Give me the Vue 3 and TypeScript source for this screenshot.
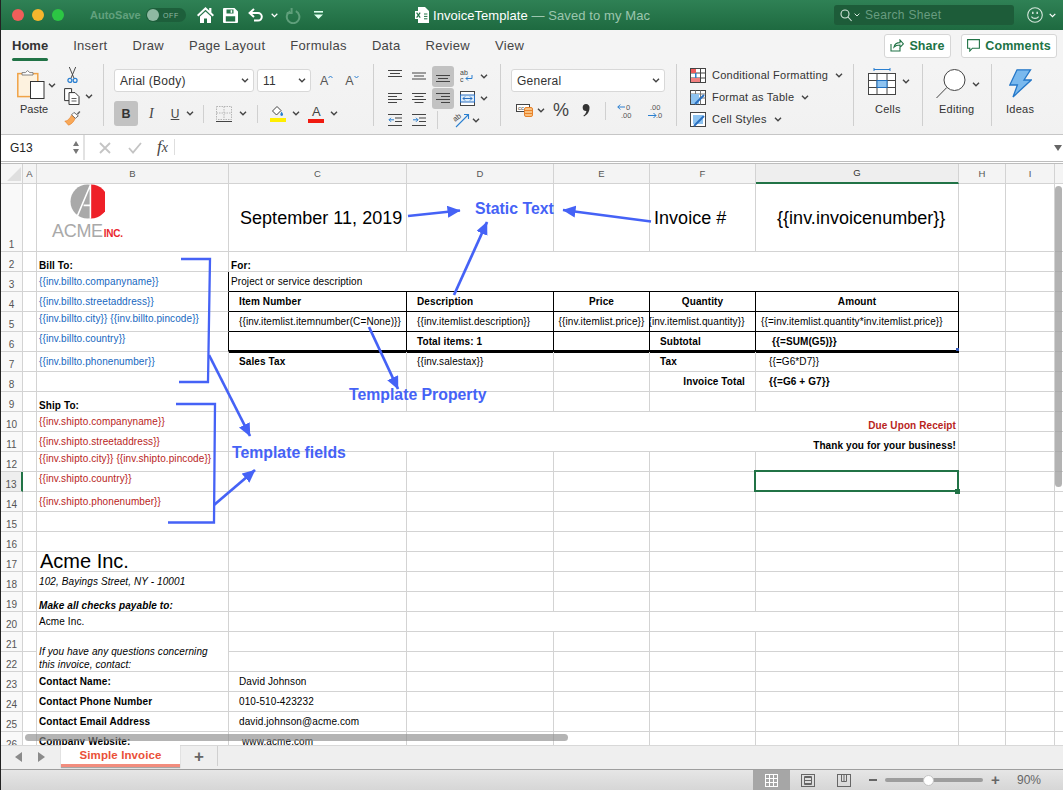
<script setup lang="ts">
type Spec = { t?: string; c?: string; span?: number; rows?: number; logo?: boolean }

const widths = [14, 192, 178, 147, 96, 106, 203, 47, 49, 9]
const colNames = ['A', 'B', 'C', 'D', 'E', 'F', 'G', 'H', 'I', '']
const gridColumns = '22px ' + widths.join('px ') + 'px'

const T = 'kr kb'
const spec: Record<number, Record<number, Spec>> = {
  1: {
    1: { logo: true },
    2: { t: 'September 11, 2019', c: 'big mc pl11' },
    5: { t: 'Invoice #', c: 'big mc pl4' },
    6: { t: '{{inv.invoicenumber}}', c: 'big mc pl21' },
  },
  2: { 1: { t: 'Bill To:', c: 'bold bot pl2' }, 2: { t: 'For:', c: 'bold bot pl2', span: 5 } },
  3: {
    1: { t: '{{inv.billto.companyname}}', c: 'blue mid pl2 kr' },
    2: { t: 'Project or service description', c: 'mid pl2 kb', span: 5 },
  },
  4: {
    1: { t: '{{inv.billto.streetaddress}}', c: 'blue mid pl2 kr' },
    2: { t: 'Item Number', c: 'bold mid pl10 ' + T },
    3: { t: 'Description', c: 'bold mid pl10 ' + T },
    4: { t: 'Price', c: 'bold mid ctr ' + T },
    5: { t: 'Quantity', c: 'bold mid ctr ' + T },
    6: { t: 'Amount', c: 'bold mid ctr ' + T },
  },
  5: {
    1: { t: '{{inv.billto.city}} {{inv.billto.pincode}}', c: 'blue top pl2 kr' },
    2: { t: '{{inv.itemlist.itemnumber(C=None)}}', c: 'mid pl10 ' + T },
    3: { t: '{{inv.itemlist.description}}', c: 'mid pl10 ' + T },
    4: { t: '{{inv.itemlist.price}}', c: 'mid ctr ' + T },
    5: { t: '{{inv.itemlist.quantity}}', c: 'mid clip ' + T },
    6: { t: '{{=inv.itemlist.quantity*inv.itemlist.price}}', c: 'mid pl5 ' + T },
  },
  6: {
    1: { t: '{{inv.billto.country}}', c: 'blue top pl2 kr' },
    2: { c: 'kr thick' },
    3: { t: 'Total items: 1', c: 'bold mid pl10 kr thick' },
    4: { c: 'kr thick' },
    5: { t: 'Subtotal', c: 'bold mid pl10 kr thick' },
    6: { t: '{{=SUM(G5)}}', c: 'bold mid pl16 kr thick handle' },
  },
  7: {
    1: { t: '{{inv.billto.phonenumber}}', c: 'blue mid pl2' },
    2: { t: 'Sales Tax', c: 'bold mid pl10' },
    3: { t: '{{inv.salestax}}', c: 'mid pl10' },
    5: { t: 'Tax', c: 'bold mid pl10' },
    6: { t: '{{=G6*D7}}', c: 'mid pl13' },
  },
  8: { 5: { t: 'Invoice Total', c: 'bold mid end pr10' }, 6: { t: '{{=G6 + G7}}', c: 'bold mid pl13' } },
  9: { 1: { t: 'Ship To:', c: 'bold bot pl2' } },
  10: {
    1: { t: '{{inv.shipto.companyname}}', c: 'red mid pl2' },
    2: { t: 'Due Upon Receipt', c: 'red bold bot end pr2', span: 5 },
  },
  11: {
    1: { t: '{{inv.shipto.streetaddress}}', c: 'red mid pl2' },
    2: { t: 'Thank you for your business!', c: 'bold bot end pr2', span: 5 },
  },
  12: { 1: { t: '{{inv.shipto.city}} {{inv.shipto.pincode}}', c: 'red top pl2' } },
  13: { 1: { t: '{{inv.shipto.country}}', c: 'red top pl2' }, 6: { c: 'sel' } },
  14: { 1: { t: '{{inv.shipto.phonenumber}}', c: 'red mid pl2' } },
  17: { 1: { t: 'Acme Inc.', c: 'acme pl3' } },
  18: { 1: { t: '102, Bayings Street, NY - 10001', c: 'ital mid pl2' } },
  19: { 1: { t: 'Make all checks payable to:', c: 'ital bold bot pl2' } },
  20: { 1: { t: 'Acme Inc.', c: 'mid pl2' }, 3: { span: 2 }, 5: { span: 2 } },
  21: { 1: { t: 'If you have any questions concerning this invoice, contact:', c: 'ital wrap pl2', rows: 2 } },
  23: { 1: { t: 'Contact Name:', c: 'bold mid pl2' }, 2: { t: 'David Johnson', c: 'mid pl10' } },
  24: { 1: { t: 'Contact Phone Number', c: 'bold mid pl2' }, 2: { t: '010-510-423232', c: 'mid pl10' } },
  25: { 1: { t: 'Contact Email Address', c: 'bold mid pl2' }, 2: { t: 'david.johnson@acme.com', c: 'mid pl10' } },
  26: { 1: { t: 'Company Website:', c: 'bold mid pl2' }, 2: { t: 'www.acme.com', c: 'mid pl13' } },
}

interface Cell { key: string; t?: string; cls: string; style?: Record<string, string>; logo?: boolean }
const cells: Cell[] = []
cells.push({ key: 'corner', cls: 'hd corner' })
colNames.forEach((n, i) => cells.push({ key: 'h' + i, t: n, cls: 'hd colh' + (n === 'G' ? ' active' : '') + (n === '' ? ' noline' : '') }))

for (let r = 1; r <= 26; r++) {
  cells.push({ key: 'r' + r, t: String(r), cls: 'hd rowh' + (r === 13 ? ' activer' : '') })
  const row = spec[r] || {}
  for (let c = 0; c < colNames.length; c++) {
    if (r === 22 && c === 1) continue
    const s = row[c] || {}
    const style: Record<string, string> = {}
    if (s.span) style.gridColumn = 'span ' + s.span
    if (s.rows) style.gridRow = 'span ' + s.rows
    cells.push({
      key: r + '-' + c,
      t: s.t,
      cls: 'cell ' + (s.c || '') + (c === 9 ? ' noline' : ''),
      style,
      logo: s.logo,
    })
    if (s.span) c += s.span - 1
  }
}
</script>

<template>
  <div class="win">
    <header class="titlebar">
      <div class="tb-left">
        <i class="light l-r"></i><i class="light l-y"></i><i class="light l-g"></i>
        <span class="autosave">AutoSave</span>
        <span class="toggle"><i class="knob"></i><b>OFF</b></span>
        <svg class="ic home" width="17" height="16" viewBox="0 0 17 16"><path fill="#fff" d="M8.5 0 0 8l1.4 1.4 7.1-6.6 7.1 6.6L17 8l-2.6-2.5V1h-2.2v2.4z"/><path fill="#fff" d="M8.5 4.6 3 9.6V16h4v-4.5h3V16h4V9.6z"/></svg>
        <svg class="ic save" width="15" height="15" viewBox="0 0 15 15"><path fill="#fff" fill-rule="evenodd" d="M1 0h10.5L15 3.4V14a1 1 0 0 1-1 1H1a1 1 0 0 1-1-1V1a1 1 0 0 1 1-1zm2.5 1.6v4h7v-4zm-.7 6.6v5.2h9.4V8.2z"/><rect x="7.6" y="2.2" width="1.6" height="2.6" fill="#fff"/></svg>
        <svg class="ic undo" width="16" height="14" viewBox="0 0 16 14" fill="none" stroke="#fff" stroke-width="2"><path d="M6 1 1.6 5 6 9"/><path d="M1.6 5H10a3.8 3.8 0 0 1 0 7.6H6"/></svg>
        <svg class="ic chevw" width="7" height="5" viewBox="0 0 7 5" fill="none" stroke="#fff" stroke-width="1.3"><path d="m.7.8 2.8 2.8L6.3.8"/></svg>
        <svg class="ic redo" width="16" height="17" viewBox="0 0 16 17" fill="none" stroke="#5f9f7b" stroke-width="2"><path d="M10.8 4.2a6.3 6.3 0 1 1-5.6.1"/><path d="M6.6 1v5H1.8"/></svg>
        <svg class="ic custom" width="9" height="8" viewBox="0 0 9 8"><rect width="9" height="1.6" fill="#dfe" /><path d="M0 3.4h9L4.5 8z" fill="#dfe"/></svg>
      </div>
      <svg class="docicon" width="14" height="16" viewBox="0 0 14 16"><path fill="#fff" d="M3 0h7l4 4v12H3z"/><rect x="0" y="4" width="8" height="8" fill="#fff"/><path d="m1.6 5.6 3.6 5M5.2 5.6l-3.6 5" stroke="#217346" stroke-width="1.2"/><path d="M9 7h3.4M9 9.4h3.4M9 11.8h3.4" stroke="#217346"/></svg>
      <span class="doc">InvoiceTemplate</span><span class="saved">&nbsp;— Saved to my Mac</span>
      <div class="search">
        <svg width="14" height="13" viewBox="0 0 14 13" fill="none" stroke="#d5e6dc" stroke-width="1.1"><circle cx="5" cy="5" r="4"/><path d="m8 8 3.6 4"/></svg>
        <svg class="s-chev" width="6" height="4" viewBox="0 0 6 4" fill="none" stroke="#d5e6dc"><path d="m.6.6 2.4 2.4L5.4.6"/></svg>
        <span>Search Sheet</span>
      </div>
      <svg class="smile" width="16" height="16" viewBox="0 0 16 16" fill="none" stroke="#d5e6dc" stroke-width="1.1"><circle cx="8" cy="8" r="7.3"/><path d="M4.4 9.6c1.6 2.4 5.6 2.4 7.2 0"/><path d="M5.8 4.8v2.2M10.2 4.8v2.2" stroke-width="1.5"/></svg>
      <svg class="sm-chev" width="7" height="5" viewBox="0 0 7 5" fill="none" stroke="#fff" stroke-width="1.2"><path d="m.7.8 2.8 2.8L6.3.8"/></svg>
    </header>

    <nav class="tabs">
      <span class="tab on">Home</span><span class="tab">Insert</span><span class="tab">Draw</span><span class="tab">Page Layout</span><span class="tab">Formulas</span><span class="tab">Data</span><span class="tab">Review</span><span class="tab">View</span>
      <button class="pill share">
        <svg width="14" height="13" viewBox="0 0 14 13" fill="none" stroke="#217346" stroke-width="1.1"><path d="M1 5v7h9V9"/><path d="M4 8c.6-3 3-4.4 6-4.4V1l3.4 3.8L10 8.4V6C7.6 6 5.4 6.6 4 8z"/></svg>
        Share
      </button>
      <button class="pill comments">
        <svg width="13" height="13" viewBox="0 0 13 13" fill="none" stroke="#217346" stroke-width="1.1"><path d="M.6.6h11.8v8.6H5.4L2.8 12V9.2H.6z"/></svg>
        Comments
      </button>
    </nav>

    <section class="ribbon">
      <div class="grp g-clip">
        <div class="paste">
          <div class="paste-top">
            <svg width="28" height="29" viewBox="0 0 28 29"><rect x=".8" y="3.6" width="20" height="23" fill="#fdf2df" stroke="#f0a347" stroke-width="1.5"/><path d="M5 5V2.6h3.4L10.6.6l2.2 2H16V5z" fill="#fff" stroke="#777" stroke-width=".9"/><rect x="13.5" y="11.5" width="13.5" height="17" fill="#fff" stroke="#333"/></svg>
            <svg class="chev" width="8" height="5" viewBox="0 0 8 5"><path d="m1 .8 3 3 3-3"/></svg>
          </div>
          <span class="lbl">Paste</span>
        </div>
        <div class="clip-small">
          <svg class="cut" width="11" height="17" viewBox="0 0 11 17" fill="none"><path d="M2.2 0 7 11.5M8.8 0 4 11.5" stroke="#444" stroke-width="1"/><circle cx="2.8" cy="13.8" r="2" stroke="#2a7fd0" stroke-width="1.3"/><circle cx="8.2" cy="13.8" r="2" stroke="#2a7fd0" stroke-width="1.3"/></svg>
          <div class="irow">
            <svg width="16" height="17" viewBox="0 0 16 17" fill="#fff" stroke="#333"><path d="M.6.6h7v12h-7z"/><path d="M5 4.6h6l4 4v8H5z"/><path d="M7.5 10.5h5M7.5 13h5" stroke-width=".8"/></svg>
            <svg class="chev mchev" width="8" height="5" viewBox="0 0 8 5"><path d="m1 .8 3 3 3-3"/></svg>
          </div>
          <svg class="brush" width="17" height="16" viewBox="0 0 17 16"><path d="M10 2.5 14.5 6l-3 2.6L7.6 5z" fill="#fff" stroke="#666"/><path d="m13 3.6 2.6-2.6 1 1-2.4 2.8z" fill="#666"/><path d="M7.4 5.4 11 9c-1 3-3.5 5.6-6.6 6.6L.6 11.4c1.4 0 2.6-.4 3.6-1.6C5.6 9 6.6 7 7.4 5.4z" fill="#f8a858" stroke="#e8822a" stroke-width=".7"/></svg>
        </div>
      </div>

      <div class="grp g-font">
        <div class="r1">
          <div class="sel-box font-box">Arial (Body)<svg class="chev" width="8" height="5" viewBox="0 0 8 5"><path d="m1 .8 3 3 3-3"/></svg></div>
          <div class="sel-box size-box">11<svg class="chev" width="8" height="5" viewBox="0 0 8 5"><path d="m1 .8 3 3 3-3"/></svg></div>
          <span class="aa a1">A<svg width="5" height="4" viewBox="0 0 5 4" fill="none" stroke="#2a7fd0"><path d="m.5 3 2-2 2 2"/></svg></span>
          <span class="aa a2">A<svg width="5" height="4" viewBox="0 0 5 4" fill="none" stroke="#2a7fd0"><path d="m.5 1 2 2 2-2"/></svg></span>
        </div>
        <div class="r2">
          <span class="fbtn bsel">B</span>
          <span class="fbtn it">I</span>
          <span class="fbtn un">U</span>
          <svg class="chev c-u" width="8" height="5" viewBox="0 0 8 5"><path d="m1 .8 3 3 3-3"/></svg>
          <i class="vsep s1"></i>
          <svg class="bd" width="16" height="16" viewBox="0 0 16 16" fill="none" stroke="#b5b5b5" stroke-dasharray="1.5 1"><rect x=".5" y=".5" width="15" height="13"/><path d="M8 .5v13M.5 7h15"/><path d="M0 15.5h16" stroke="#444" stroke-dasharray="none"/></svg>
          <svg class="chev c-b" width="8" height="5" viewBox="0 0 8 5"><path d="m1 .8 3 3 3-3"/></svg>
          <i class="vsep s2"></i>
          <svg class="fill" width="16" height="17" viewBox="0 0 16 17"><path d="M7 1.5 2.5 6l4 4 4.5-4.500z" fill="#fff" stroke="#444"/><path d="M11.500 6.500c1 1.400 1.600 2.200 1.600 3a1.400 1.400 0 0 1-2.800 0c0-.8.600-1.600 1.200-3z" fill="#2a7fd0"/><rect y="13" width="16" height="4" fill="#ffee00"/></svg>
          <svg class="chev c-f" width="8" height="5" viewBox="0 0 8 5"><path d="m1 .8 3 3 3-3"/></svg>
          <span class="fcol">A</span>
          <svg class="chev c-c" width="8" height="5" viewBox="0 0 8 5"><path d="m1 .8 3 3 3-3"/></svg>
        </div>
      </div>

      <div class="grp g-align">
        <div class="al-grid">
          <span class="al"><svg width="14" height="12" viewBox="0 0 14 12"><path d="M0 .5h14M2 3.500h10M0 6.500h14"/></svg></span>
          <span class="al"><svg width="14" height="12" viewBox="0 0 14 12"><path d="M0 3h14M2 6h10M0 9h14"/></svg></span>
          <span class="al hl"><svg width="14" height="12" viewBox="0 0 14 12"><path d="M0 5.500h14M2 8.500h10M0 11.500h14"/></svg></span>
          <span class="al"><svg width="14" height="14" viewBox="0 0 14 14" fill="none"><text x="0" y="6" font-size="7" fill="#444" stroke="none" font-family="Liberation Sans">ab</text><text x="0" y="13" font-size="7" fill="#444" stroke="none" font-family="Liberation Sans">c</text><path d="M12 6v3.500H6m2-2-2 2 2 2" stroke="#2a7fd0"/></svg></span>
          <svg class="chev" width="8" height="5" viewBox="0 0 8 5"><path d="m1 .8 3 3 3-3"/></svg>

          <span class="al"><svg width="14" height="12" viewBox="0 0 14 12"><path d="M0 1.500h14M0 4.500h9M0 7.500h14M0 10.500h9"/></svg></span>
          <span class="al"><svg width="14" height="12" viewBox="0 0 14 12"><path d="M0 1.500h14M2.500 4.500h9M0 7.500h14M2.500 10.500h9"/></svg></span>
          <span class="al hl"><svg width="14" height="12" viewBox="0 0 14 12"><path d="M0 1.500h14M5 4.500h9M0 7.500h14M5 10.500h9"/></svg></span>
          <span class="al"><svg width="15" height="15" viewBox="0 0 15 15" fill="none"><rect x=".5" y=".5" width="14" height="14" stroke="#444" fill="#fff"/><rect x=".5" y="4" width="14" height="7" stroke="#2a6fc0" fill="#dcecfa"/><path d="M3 7.500h9M5 5.500l-2 2 2 2M10 5.500l2 2-2 2" stroke="#2a6fc0"/></svg></span>
          <svg class="chev" width="8" height="5" viewBox="0 0 8 5"><path d="m1 .8 3 3 3-3"/></svg>

          <span class="al"><svg width="14" height="12" viewBox="0 0 14 12"><path d="M0 .5h14M7 4h7M7 7.500h7M0 11.500h14"/><path d="M6 5.800H1m2-2-2 2 2 2" stroke="#2a7fd0" fill="none"/></svg></span>
          <span class="al"><svg width="14" height="12" viewBox="0 0 14 12"><path d="M0 .5h14M7 4h7M7 7.500h7M0 11.500h14"/><path d="M1 5.800h5m-2-2 2 2-2 2" stroke="#2a7fd0" fill="none"/></svg></span>
          <i class="vsep s3"></i>
          <span class="al orient"><svg width="17" height="16" viewBox="0 0 17 16" fill="none"><text x="0" y="8" font-size="7.500" fill="#444" stroke="none" font-family="Liberation Sans" transform="rotate(-40 4 6)">ab</text><path d="M3 15 15.500 2.500m-4.500 0h4.500V7" stroke="#2a7fd0" stroke-width="1.100"/></svg></span>
          <svg class="chev c3" width="8" height="5" viewBox="0 0 8 5"><path d="m1 .8 3 3 3-3"/></svg>
        </div>
      </div>

      <div class="grp g-num">
        <div class="sel-box num-box">General<svg class="chev" width="8" height="5" viewBox="0 0 8 5"><path d="m1 .8 3 3 3-3"/></svg></div>
        <div class="r2 n2">
          <svg class="acct" width="18" height="13" viewBox="0 0 18 13" fill="none"><rect x=".5" y=".5" width="13" height="7" stroke="#444" fill="#fff"/><text x="2" y="6.300" font-size="6" fill="#444" font-family="Liberation Sans">cc</text><rect x="8.500" y="3.500" width="8" height="9" rx="1.500" fill="#f8c07e" stroke="#e8822a"/><path d="M8.500 6.500h8M8.500 9.500h8" stroke="#e8822a"/></svg>
          <svg class="chev c-acct" width="8" height="5" viewBox="0 0 8 5"><path d="m1 .8 3 3 3-3"/></svg>
          <span class="pct">%</span>
          <svg class="comma" width="8" height="13" viewBox="0 0 8 13"><path fill="#333" d="M4 0a3.500 3.500 0 0 1 3.500 4c0 4-2.500 7-5.500 8.500l-.6-.9c1.800-1.200 2.800-2.800 3-4.600A3.500 3.500 0 1 1 4 0z"/></svg>
          <i class="vsep s4"></i>
          <svg class="dec" width="17" height="16" viewBox="0 0 17 16" fill="none"><text x="9" y="6.500" font-size="7.500" fill="#555" font-family="Liberation Sans">0</text><text x="4" y="15" font-size="7.500" fill="#555" font-family="Liberation Sans">.00</text><path d="M8 4H.8m2.500-2.500L.8 4l2.500 2.500" stroke="#2a7fd0"/></svg>
          <svg class="dec2" width="16" height="16" viewBox="0 0 16 16" fill="none"><text x="3" y="6.500" font-size="7.500" fill="#555" font-family="Liberation Sans">.00</text><text x="9" y="15" font-size="7.500" fill="#555" font-family="Liberation Sans">.0</text><path d="M1 12.500h8m-2.500-2.500 2.500 2.500L6.500 15" stroke="#2a7fd0"/></svg>
        </div>
      </div>

      <div class="grp g-styles">
        <div class="st">
          <svg width="16" height="15" viewBox="0 0 16 15" fill="none" stroke="#444"><rect x=".5" y=".5" width="15" height="14" fill="#fff"/><path d="M5.500.5v14M10.500.5v14M.5 5h15M.5 10h15"/><rect x="1" y="1" width="5" height="4" fill="#ee5a5a" stroke="none"/><rect x="1" y="10" width="9" height="4" fill="#f28080" stroke="none"/><rect x="5" y="5" width="1.500" height="5" fill="#2a7fd0" stroke="none"/></svg>
          <span>Conditional Formatting</span>
          <svg class="chev" width="8" height="5" viewBox="0 0 8 5"><path d="m1 .8 3 3 3-3"/></svg>
        </div>
        <div class="st">
          <svg width="16" height="15" viewBox="0 0 16 15" fill="none" stroke="#444"><rect x=".5" y=".5" width="15" height="14" fill="#fff"/><path d="M.5 4h15M.5 8h15M5.500.5v14M10.500.5v14" stroke="#777"/><rect x="1" y="4" width="8" height="10" fill="#8ec3f0" stroke="none"/><path d="m5 14 9-9" stroke="#2a6fc0" stroke-width="2"/></svg>
          <span>Format as Table</span>
          <svg class="chev" width="8" height="5" viewBox="0 0 8 5"><path d="m1 .8 3 3 3-3"/></svg>
        </div>
        <div class="st">
          <svg width="16" height="15" viewBox="0 0 16 15" fill="none" stroke="#444"><rect x=".5" y=".5" width="15" height="14" fill="#fff"/><rect x="3" y="3" width="10" height="9" fill="#8ec3f0" stroke="none"/><path d="m4 14 10-10" stroke="#2a6fc0" stroke-width="2"/></svg>
          <span>Cell Styles</span>
          <svg class="chev" width="8" height="5" viewBox="0 0 8 5"><path d="m1 .8 3 3 3-3"/></svg>
        </div>
      </div>

      <div class="grp g-big g-cells">
        <div class="big-top">
          <svg width="28" height="27" viewBox="0 0 28 27" fill="none" stroke="#444"><path d="M6 1.500h16M6 0v3M22 0v3" stroke="#2a7fd0"/><rect x=".5" y="5.500" width="27" height="21" fill="#fff"/><path d="M9 5.500v21M19 5.500v21M.5 12.500h27M.5 19.500h27"/><rect x="9" y="12.500" width="10" height="7" fill="#8ec3f0" stroke="#1f70c0"/></svg>
          <svg class="chev" width="8" height="5" viewBox="0 0 8 5"><path d="m1 .8 3 3 3-3"/></svg>
        </div>
        <span class="lbl">Cells</span>
      </div>
      <div class="grp g-big g-edit">
        <div class="big-top">
          <svg width="30" height="30" viewBox="0 0 30 30" fill="none" stroke="#444"><circle cx="18.500" cy="11" r="10.500" fill="#fff"/><path d="M10.800 18.500.5 29"/></svg>
          <svg class="chev" width="8" height="5" viewBox="0 0 8 5"><path d="m1 .8 3 3 3-3"/></svg>
        </div>
        <span class="lbl">Editing</span>
      </div>
      <div class="grp g-big g-ideas">
        <svg width="23" height="29" viewBox="0 0 23 29"><path d="M8 .8h13.500L15 11h7.200L4 28l4.400-12H.8z" fill="#7ab9ee" stroke="#2477c8" stroke-width="1.300"/></svg>
        <span class="lbl">Ideas</span>
      </div>
    </section>

    <div class="formula">
      <div class="namebox">
        <span>G13</span>
        <div class="step"><i class="up"></i><i class="dn"></i></div>
      </div>
      <svg class="fx-x" width="12" height="12" viewBox="0 0 12 12" fill="none" stroke="#c4c4c4" stroke-width="1.800"><path d="m1 1 10 10M11 1 1 11"/></svg>
      <svg class="fx-c" width="14" height="12" viewBox="0 0 14 12" fill="none" stroke="#c4c4c4" stroke-width="1.800"><path d="m1 6 4 4.500L13 1"/></svg>
      <span class="fx"><i>f</i><i>x</i></span>
      <i class="fx-sep"></i>
      <i class="fx-drop"></i>
    </div>

    <main class="sheet">
      <div class="grid" :style="{ gridTemplateColumns: gridColumns }">
        <div v-for="c in cells" :key="c.key" :class="c.cls" :style="c.style">
          <div v-if="c.logo" class="logo">
            <svg width="35" height="35" viewBox="0 0 36 36"><circle cx="18" cy="18" r="17.500" fill="#a9a9a9"/><path d="M21.500.4A17.500 17.500 0 0 1 21.500 35.600z" fill="#ee2028"/><path d="M7.500 33 21 1M21 .5V35.500M14 22h7" stroke="#fff" stroke-width="1.600" fill="none"/></svg>
            <div class="acme-word"><span class="a-g">ACME</span><span class="a-r">INC.</span></div>
          </div>
          <template v-else>{{ c.t }}</template>
        </div>
      </div>

      <svg class="marks" width="1062" height="581" viewBox="1 164 1062 581" fill="none">
        <defs>
          <marker id="ah" markerUnits="userSpaceOnUse" markerWidth="15" markerHeight="13" refX="12.500" refY="6" orient="auto"><path d="M0 0 13 6 0 12z" fill="#4562f6"/></marker>
        </defs>
        <g stroke="#4562f6" stroke-width="2.300">
          <path d="M181 259h29l-2 123h-29"/>
          <path d="M176 404h39l-1 118.500h-46"/>
        </g>
        <g stroke="#4562f6" stroke-width="2.700">
          <path d="M209 355 250 436" marker-end="url(#ah)"/>
          <path d="M214 505 255 470" marker-end="url(#ah)"/>
          <path d="M454 295 487 222" marker-end="url(#ah)"/>
          <path d="M408 216 460 210.500" marker-end="url(#ah)"/>
          <path d="M651 221.500 563 210" marker-end="url(#ah)"/>
          <path d="M369 327 398 389" marker-end="url(#ah)"/>
        </g>
      </svg>
      <span class="note n-static">Static Text</span>
      <span class="note n-prop">Template Property</span>
      <span class="note n-fields">Template fields</span>

      <i class="hscroll"></i>
      <i class="vscroll"></i>
    </main>

    <div class="sheetbar">
      <i class="tri tl"></i><i class="tri tr"></i>
      <span class="sheettab">Simple Invoice</span>
      <span class="plus">+</span>
      <i class="bar-sep"></i>
    </div>

    <footer class="status">
      <span class="view active-view"><svg width="13" height="13" viewBox="0 0 13 13" fill="none" stroke="#fff"><rect x=".5" y=".5" width="12" height="12"/><path d="M4.500.5v12M8.500.5v12M.5 4.500h12M.5 8.500h12"/></svg></span>
      <span class="view"><svg width="14" height="13" viewBox="0 0 14 13" fill="none" stroke="#666"><rect x=".5" y=".5" width="13" height="12"/><path d="M4 3.500h6M4 6.500h6M4 9.500h6M3.500 2.500h7v8h-7z"/></svg></span>
      <span class="view"><svg width="14" height="13" viewBox="0 0 14 13" fill="none" stroke="#666"><rect x=".5" y=".5" width="13" height="12"/><path d="M4.500.5v7h5v-7M7 .5v7"/></svg></span>
      <i class="zminus"></i>
      <div class="slider"><i class="thumb"></i></div>
      <span class="zplus">+</span>
      <span class="zoom">90%</span>
    </footer>
  </div>
</template>

<style>
html, body { margin: 0; padding: 0; background: #fff; }
</style>

<style scoped>
.win {
  width: 1063px; height: 790px; box-sizing: border-box; border-left: 1px solid #222;
  display: flex; flex-direction: column; overflow: hidden; background: #fff;
  font-family: "Liberation Sans", Arial, sans-serif; color: #000;
}

/* title bar */
.titlebar { height: 30px; flex: none; display: flex; align-items: center; background: linear-gradient(#2f8155, #1e6a40); color: #fff; }
.tb-left { width: 414px; display: flex; align-items: center; padding-left: 11px; box-sizing: border-box; flex: none; height: 30px; }
.light { width: 12px; height: 12px; border-radius: 50%; margin-right: 8px; flex: none; }
.l-r { background: #ef5e5a; }
.l-y { background: #f7b62d; }
.l-g { background: #2cc644; }
.autosave { margin-left: 18px; font-size: 11px; font-weight: 700; color: #62a17e; width: 56px; flex: none; }
.toggle { width: 40px; height: 14px; border-radius: 7px; background: #1d5f3b; display: flex; align-items: center; flex: none; box-sizing: border-box; padding-left: 1px; }
.knob { width: 12px; height: 12px; border-radius: 50%; background: #8fb9a2; flex: none; }
.toggle b { font-size: 7px; color: #8fb9a2; margin-left: 4px; font-weight: 400; letter-spacing: .6px; }
.ic { flex: none; }
.home { margin-left: 11px; }
.save { margin-left: 9px; }
.undo { margin-left: 10px; }
.chevw { margin-left: 7px; }
.redo { margin-left: 7px; }
.custom { margin-left: 13px; }
.docicon { flex: none; }
.doc { margin-left: 4px; font-size: 13px; color: #fff; letter-spacing: .05px; }
.saved { font-size: 13px; color: #9cc6ae; white-space: nowrap; letter-spacing: .1px; }
.search { margin-left: auto; width: 180px; height: 20px; background: #1d5c39; border-radius: 3px; display: flex; align-items: center; padding-left: 6px; box-sizing: border-box; color: #689c80; font-size: 12px; letter-spacing: .3px; }
.s-chev { margin: 0 5px 0 0; }
.smile { margin-left: 13px; flex: none; }
.sm-chev { margin: 0 7px 0 6px; flex: none; }

/* tabs */
.tabs { height: 34px; flex: none; display: flex; align-items: center; background: #f4f4f4; padding: 0 6px 3px 11px; box-sizing: border-box; gap: 25px; font-size: 13px; color: #454545; letter-spacing: .3px; }
.tab { position: relative; line-height: 20px; white-space: nowrap; }
.tab.on { font-weight: 700; color: #333; letter-spacing: 0; }
.tab.on::after { content: ""; position: absolute; left: 0; right: 0; bottom: -5px; height: 3px; background: #217346; border-radius: 2px; }
.pill { height: 24px; background: #fff; border: 1px solid #d6d6d6; border-radius: 3px; color: #217346; font: 700 12.500px "Liberation Sans", Arial, sans-serif; display: flex; align-items: center; justify-content: center; gap: 5px; padding: 0; letter-spacing: .1px; }
.share { width: 67px; margin-left: auto; }
.comments { width: 96px; margin-left: -15px; }

/* ribbon */
.ribbon { height: 71px; flex: none; display: flex; background: linear-gradient(#f4f4f4, #f1f1f1); border-bottom: 1px solid #c6c6c6; box-sizing: border-box; font-size: 11px; color: #333; }
.grp { height: 62px; margin-top: 0; box-sizing: border-box; border-right: 1px solid #cfcfcf; flex: none; }
.chev { fill: none; stroke: #444; stroke-width: 1.400; flex: none; }
.lbl { font-size: 11px; letter-spacing: .25px; color: #333; white-space: nowrap; line-height: 13px; }

.g-clip { width: 103px; display: flex; padding-left: 16px; }
.paste { width: 46px; display: flex; flex-direction: column; align-items: flex-start; padding-top: 6px; }
.paste-top { display: flex; align-items: flex-start; }
.paste-top .chev { margin: 13px 0 0 3px; }
.paste .lbl { margin: 4px 0 0 3px; letter-spacing: 0; }
.clip-small { display: flex; flex-direction: column; align-items: flex-start; padding-top: 3px; margin-left: 1px; }
.cut { margin-left: 3px; }
.irow { display: flex; align-items: center; margin-top: 5px; }
.mchev { margin-left: 5px; }
.brush { margin-top: 5px; }

.g-font { width: 270px; padding: 5px 0 0 10px; }
.r1, .r2 { display: flex; align-items: center; }
.sel-box { height: 23px; background: #fff; border: 1px solid #d8d8d8; border-radius: 3px; box-sizing: border-box; display: flex; align-items: center; justify-content: space-between; padding: 0 4px 0 5px; font-size: 12px; color: #333; letter-spacing: .25px; }
.font-box { width: 140px; }
.size-box { width: 54px; margin-left: 3px; }
.aa { font-size: 12.500px; color: #555; display: flex; align-items: flex-start; }
.aa svg { margin-top: 1px; }
.a1 { margin-left: 9px; }
.a2 { margin-left: 12px; }
.r2 { margin-top: 9px; height: 25px; }
.fbtn { font-size: 12.500px; color: #444; }
.bsel { width: 24px; height: 25px; background: #c2c2c2; border-radius: 3px; font-weight: 700; display: flex; align-items: center; justify-content: center; color: #333; }
.it { font-family: "Liberation Serif", serif; font-style: italic; margin-left: 11px; font-size: 14px; }
.un { text-decoration: underline; margin-left: 17px; font-size: 12px; }
.c-u { margin-left: 7px; }
.vsep { display: block; width: 1px; background: #d0d0d0; flex: none; }
.s1 { height: 18px; margin-left: 9px; }
.bd { margin-left: 12px; flex: none; }
.c-b { margin-left: 7px; }
.s2 { height: 18px; margin-left: 10px; }
.fill { margin-left: 12px; flex: none; }
.c-f { margin-left: 6px; }
.fcol { margin-left: 8px; width: 16px; text-align: center; font-size: 13px; line-height: 14px; color: #444; border-bottom: 4px solid #f01a10; }
.c-c { margin-left: 6px; }

.g-align { width: 127px; padding: 0 0 0 10px; }
.al-grid { display: grid; grid-template-columns: 24px 24px 24px 24px 14px; grid-auto-rows: 22px; align-items: center; padding-top: 1px; }
.al { height: 21px; width: 22px; display: flex; align-items: center; justify-content: center; border-radius: 3px; }
.al svg { stroke: #444; flex: none; }
.al.hl { background: #c2c2c2; }
.s3 { height: 18px; justify-self: start; margin-left: 5px; grid-column: 3; }
.orient { margin-left: -6px; grid-column: 4; }
.c3 { margin-left: -8px; }

.g-num { width: 176px; padding: 5px 0 0 10px; }
.num-box { width: 154px; }
.n2 { margin-top: 6px; }
.acct { margin-left: 5px; flex: none; }
.c-acct { margin-left: 3px; }
.pct { font-size: 18px; color: #444; margin-left: 8px; width: 20px; }
.comma { margin-left: 9px; flex: none; }
.s4 { height: 18px; margin-left: 15px; }
.dec { margin-left: 11px; flex: none; }
.dec2 { margin-left: 13px; flex: none; }

.g-styles { width: 177px; padding: 0 0 0 13px; display: flex; flex-direction: column; }
.st { height: 22px; flex: none; display: flex; align-items: center; font-size: 11px; letter-spacing: .25px; color: #333; }
.st span { margin: 0 7px 0 6px; }

.g-big { display: flex; flex-direction: column; align-items: center; }
.big-top { display: flex; align-items: center; }
.big-top .chev { margin-left: 6px; }
.g-big .lbl { margin-top: auto; margin-bottom: 10px; }
.g-cells { width: 69px; padding: 4px 0 0 0; align-items: flex-start; padding-left: 14px; }
.g-cells .lbl { margin-left: 7px; }
.g-edit { width: 69px; padding: 5px 0 0 13px; align-items: flex-start; }
.g-edit .lbl { margin-left: 3px; }
.g-ideas { width: 69px; border-right: 0; padding: 5px 0 0 17px; align-items: flex-start; }
.g-ideas .lbl { margin-left: -3px; }

/* formula bar */
.formula { height: 29px; flex: none; display: flex; align-items: flex-start; background: #fff; border-bottom: 3px double #bdbdbd; box-sizing: border-box; }
.namebox { width: 84px; height: 25px; flex: none; box-sizing: border-box; border-right: 2px solid #e2e2e2; display: flex; align-items: center; justify-content: space-between; padding: 0 4px 0 9px; font-size: 12px; color: #222; }
.step { display: flex; flex-direction: column; gap: 3px; }
.step i { display: block; width: 0; height: 0; border-left: 3.500px solid transparent; border-right: 3.500px solid transparent; }
.step .up { border-bottom: 5px solid #777; }
.step .dn { border-top: 5px solid #777; }
.fx-x { margin: 7px 0 0 14px; flex: none; }
.fx-c { margin: 7px 0 0 17px; flex: none; }
.fx { font: italic 17px "Liberation Serif", serif; margin: 2px 0 0 15px; color: #444; width: 16px; }
.fx i:last-child { font-size: 14px; }
.fx-sep { width: 1px; height: 16px; background: #dedede; margin: 4px 0 0 1px; flex: none; }
.fx-drop { margin: 10px 1px 0 auto; width: 0; height: 0; border-left: 4px solid transparent; border-right: 4px solid transparent; border-top: 6px solid #666; }

/* sheet */
.sheet { height: 581px; flex: none; position: relative; overflow: hidden; background: #fff; }
.grid { display: grid; grid-template-rows: 20px 68px; grid-auto-rows: 20px; font-size: 10px; line-height: 12px; }
.hd, .cell { box-sizing: border-box; border-right: 1px solid #d3d3d3; border-bottom: 1px solid #d3d3d3; white-space: nowrap; min-width: 0; }
.cell { display: flex; overflow: visible; letter-spacing: .1px; }
.noline { border-right: 0; }
.hd { background: #f6f6f6; color: #555; font-size: 9.500px; display: flex; }
.corner { position: relative; }
.corner::after { content: ""; position: absolute; right: 1px; bottom: 2px; border-style: solid; border-width: 0 0 14px 14px; border-color: transparent transparent #dfdfdf transparent; }
.colh { align-items: center; justify-content: center; background: #f4f4f4; }
.colh.active { background: #eeeeee; color: #333; border-bottom: 2px solid #217346; }
.rowh { align-items: flex-end; justify-content: center; padding-bottom: 0; font-size: 10px; line-height: 12px; background: #f9f9f9; }
.rowh.activer { background: #eeeeee; border-right: 2px solid #217346; }

.top { padding-top: 1px; }
.mid { padding-top: 4px; }
.bot { padding-top: 8px; }
.mc { align-items: center; }
.pl2 { padding-left: 2px; }
.pl3 { padding-left: 3px; }
.pl4 { padding-left: 4px; }
.pl5 { padding-left: 5px; }
.pl10 { padding-left: 10px; }
.pl11 { padding-left: 11px; }
.pl13 { padding-left: 13px; }
.pl16 { padding-left: 16px; }
.pl21 { padding-left: 21px; }
.pr2 { padding-right: 2px; }
.pr10 { padding-right: 10px; }
.ctr { justify-content: center; }
.end { justify-content: flex-end; }
.clip { overflow: hidden; text-indent: -5px; }
.bold { font-weight: 700; }
.ital { font-style: italic; }
.blue { color: #1667c0; }
.red { color: #b8241c; }
.big { font-size: 18px; letter-spacing: .03px; line-height: 22px; }
.acme { font-size: 20px; line-height: 18px; letter-spacing: 0; }
.wrap { white-space: normal; align-items: flex-end; padding-bottom: 0; line-height: 12.500px; padding-right: 8px; }
.kr { border-right-color: #000; }
.kb { border-bottom-color: #000; }
.thick { border-bottom: 2px solid #000; box-shadow: 0 1px 0 #000; }
.handle { position: relative; }
.handle::after { content: ""; position: absolute; right: -1px; bottom: -1px; width: 3px; height: 3px; background: #3458b8; }
.sel { position: relative; }
.sel::before { content: ""; position: absolute; left: -2px; top: -2px; right: -1px; bottom: -1px; border: 2px solid #217346; }
.sel::after { content: ""; position: absolute; right: -2px; bottom: -3px; width: 5px; height: 5px; background: #217346; }

.logo { width: 100%; display: flex; flex-direction: column; align-items: flex-start; }
.logo svg { margin: 0 0 0 33px; display: block; }
.acme-word { display: flex; align-items: baseline; margin: 2px 0 0 15px; line-height: 20px; letter-spacing: -.3px; }
.a-g { font-size: 18px; color: #a9a9a9; }
.a-r { font-size: 10px; font-weight: 700; color: #e9272e; margin-left: 1px; }

.marks { position: absolute; left: 0; top: 0; pointer-events: none; }
.note { position: absolute; font-size: 15.800px; font-weight: 700; color: #4562f6; line-height: 18px; white-space: nowrap; }
.n-static { left: 474px; top: 36px; }
.n-prop { left: 348px; top: 222px; }
.n-fields { left: 231px; top: 280px; }
.hscroll { position: absolute; left: 24px; top: 570px; width: 543px; height: 7px; background: rgba(140, 140, 140, .65); border-radius: 4px; }
.vscroll { position: absolute; left: 1054px; top: 22px; width: 7px; height: 301px; background: rgba(160, 160, 160, .8); border-radius: 4px; }

/* sheet tabs */
.sheetbar { height: 25px; flex: none; background: #efefef; border-top: 1px solid #d8d8d8; border-bottom: 1px solid #9e9e9e; box-sizing: border-box; display: flex; align-items: flex-start; }
.tri { width: 0; height: 0; border-top: 5.500px solid transparent; border-bottom: 5.500px solid transparent; margin-top: 6px; }
.tl { border-right: 7px solid #8a8a8a; margin-left: 14px; }
.tr { border-left: 7px solid #8a8a8a; margin-left: 16px; }
.sheettab { width: 119px; height: 22px; margin: -1px 0 0 16px; box-sizing: border-box; background: #fff; color: #ea5038; font-size: 11.500px; font-weight: 700; display: flex; align-items: center; justify-content: center; border-bottom: 3px solid #f28d7e; box-shadow: 0 1px 1px rgba(0,0,0,.3); letter-spacing: .1px; }
.plus { margin-left: 14px; width: 10px; font-size: 17px; font-weight: 700; color: #666; line-height: 21px; }
.bar-sep { width: 1px; height: 20px; background: #d0d0d0; margin-left: 13px; }

/* status */
.status { height: 20px; flex: none; background: linear-gradient(#e6e6e6, #d6d6d6); display: flex; align-items: center; font-size: 12px; color: #666; padding-left: 752px; box-sizing: border-box; }
.view { width: 36px; height: 20px; display: flex; align-items: center; justify-content: center; flex: none; }
.active-view { background: #a6a6a6; width: 37px; }
.zminus { width: 8px; height: 2px; background: #666; margin-left: 7px; flex: none; }
.slider { width: 98px; height: 4px; border-radius: 2px; background: #9d9d9d; margin-left: 8px; display: flex; align-items: center; justify-content: flex-start; flex: none; }
.thumb { width: 11px; height: 11px; border-radius: 50%; background: #fff; border: 1px solid #c4c4c4; box-sizing: border-box; margin-left: 38px; }
.zplus { font-size: 15px; font-weight: 700; margin-left: 8px; width: 10px; line-height: 18px; }
.zoom { margin-left: 16px; }
</style>
